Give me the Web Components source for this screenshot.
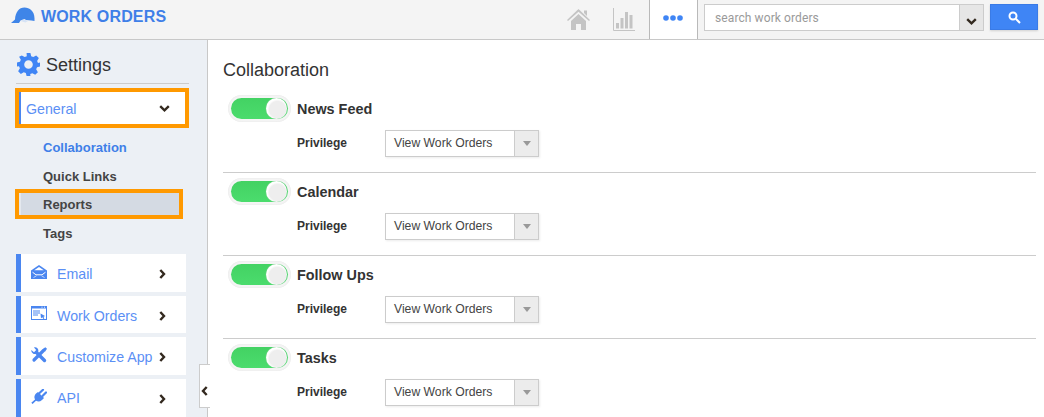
<!DOCTYPE html>
<html>
<head>
<meta charset="utf-8">
<title>Work Orders settings</title>
<style>
  html, body { margin: 0; padding: 0; height: 417px; overflow: hidden; background: #fff; font-family: "Liberation Sans", Arial, sans-serif; }
  app-shell { height: 417px; }
</style>
</head>
<body>
<app-shell>
  <top-bar slot="top"></top-bar>
  <side-bar slot="side">
    <side-sub active>Collaboration</side-sub>
    <side-sub>Quick Links</side-sub>
    <side-sub marked>Reports</side-sub>
    <side-sub>Tags</side-sub>
    <side-card icon="email" h="38" first>Email</side-card>
    <side-card icon="orders" h="37">Work Orders</side-card>
    <side-card icon="tools" h="38">Customize App</side-card>
    <side-card icon="plug" h="38">API</side-card>
  </side-bar>
  <main-pane slot="main">
    <privilege-row name="News Feed"></privilege-row>
    <privilege-row name="Calendar"></privilege-row>
    <privilege-row name="Follow Ups"></privilege-row>
    <privilege-row name="Tasks" last></privilege-row>
  </main-pane>
</app-shell>

<script>
const chevronDown = `<svg width="11" height="7" viewBox="0 0 11 7"><path d="M1.200 1.200 5.500 5.300 9.800 1.200" fill="none" stroke="#33291f" stroke-width="2.400"/></svg>`;
const chevronRight = `<svg width="7" height="10" viewBox="0 0 7 10"><path d="M1.300 1 5 5 1.300 9" fill="none" stroke="#33291f" stroke-width="2.400"/></svg>`;
const chevronLeft = `<svg width="7" height="10" viewBox="0 0 7 10"><path d="M5.700 1 2 5l3.700 4" fill="none" stroke="#33291f" stroke-width="2.400"/></svg>`;

const blue = "#4a86f0";
const icons = {
  email: `<svg width="16" height="14" viewBox="0 0 16 14"><path d="M0 5.500 8 0l8 5.500V14H0z" fill="${blue}"/><path d="M3.200 5.200 8 2l4.800 3.200z" fill="#fff"/><path d="M1.500 7.200 5 9.800h6l3.500-2.600" fill="none" stroke="#fff" stroke-width="1"/><path d="M2.500 12.500 5.500 10.800M13.500 12.500l-3-1.700" stroke="#dbe6fb" stroke-width=".8"/></svg>`,
  orders: `<svg width="16" height="14" viewBox="0 0 16 14"><rect x=".5" y=".5" width="15" height="13" fill="#fff" stroke="${blue}"/><path d="M0 0h16v2.500H0z" fill="${blue}"/><path d="M2 5h7M2 7h7M2 9h5" stroke="${blue}"/><path d="M9.500 7.500l4.500 2.500-1.500.7.800 1.800-1 .5-.9-1.800-1.400 1z" fill="${blue}"/><path d="M10.500 1.200h1M13 1.200h1" stroke="#fff" stroke-width=".9"/></svg>`,
  tools: `<svg width="16" height="16" viewBox="0 0 16 16"><path d="M5.500 5.500 13.500 13.500" stroke="${blue}" stroke-width="3.400" stroke-linecap="round"/><path d="M.3 3 3 5.200 5.200 3 3 .4C5.500-.3 7.800 1.500 7.300 4.500L5 7C2.500 7.600 0 5.500.3 3z" fill="${blue}"/><path d="M12.500 3.500 3 13" stroke="${blue}" stroke-width="3.200" stroke-linecap="round"/><path d="M11.500 2.200 14.300.2 16 1.800 14 4.800z" fill="${blue}"/></svg>`,
  plug: `<svg width="16" height="15" viewBox="0 0 16 15"><path d="M.3 13.800 4 10.500C2.800 8 3.500 6 5 4.500L7 3l6 6-2 2C9 12.800 7 13 5 11.800L1.600 15z" fill="${blue}"/><path d="M8.500 4 12 .8M11.500 7 15 3.500" stroke="${blue}" stroke-width="2.200" stroke-linecap="round"/></svg>`
};

class TopBar extends HTMLElement {
  constructor() {
    super();
    this.attachShadow({ mode: "open" });
    this.shadowRoot.innerHTML = `
      <style>
        :host { display: flex; align-items: stretch; height: 39px; background: #f4f4f4; border-bottom: 1px solid #c8c8c8; }
        .logo { display: flex; align-items: center; padding: 0 0 5px 11px; gap: 6px; color: #3f7fe8; font-weight: bold; font-size: 16px; }
        .logo svg { margin-top: -3px; }
        .logo span { letter-spacing: .15px; }
        .space { flex: 1; }
        .nav { display: flex; align-items: center; padding-bottom: 1px; }
        .home { margin-right: 23px; }
        .chart { margin-right: 14px; }
        .dots { width: 45px; background: #fff; border-left: 1px solid #b9b9b9; border-right: 1px solid #b9b9b9; display: flex; align-items: center; justify-content: center; padding: 0 2px 3px 0; }
        .search { display: flex; width: 280px; height: 27px; margin: 4px 0 0 6px; box-sizing: border-box; border: 1px solid #ccc; background: #fff; }
        .search input { flex: 1; min-width: 0; border: 0; outline: 0; padding: 1px 10px 0; font: 12px "Roboto", "Liberation Sans", sans-serif; letter-spacing: .1px; background: #fff; }
        .search input::placeholder { color: #9a9a9a; opacity: 1; }
        .drop { width: 24px; background: #e6e6e6; border-left: 1px solid #ccc; display: flex; align-items: flex-end; justify-content: center; padding-bottom: 5px; box-sizing: border-box; }
        .go { width: 48px; height: 26px; margin: 4px 6px 0 6px; background: #3f85f5; border: 1px solid #3a7be6; box-sizing: border-box; display: flex; align-items: center; justify-content: center; box-shadow: 0 1px 2px rgba(0,0,0,.15); }
      </style>
      <div class="logo">
        <svg width="24" height="17" viewBox="0 0 24 17"><path d="M0 16 4 12.500C4.500 5 8 .5 13.500.5 18.500.5 23.500 4 23.500 11.500v2.500l-3-.5L15 13l-1.500-1-4 1.500-1.500 2.500z" fill="#3f85e8"/><path d="M9.500 14c2-2 5-1.500 7.500 0l-2.500 1.500z" fill="#d6e3f5"/></svg>
        <span>WORK ORDERS</span>
      </div>
      <div class="space"></div>
      <div class="nav">
        <svg class="home" width="23" height="21" viewBox="0 0 23 21"><path d="M11.500 0 23 11l-1 1L11.500 2.800 1 12l-1-1zM4 12 11.500 5 19 12v9h-5v-6H9v6H4zM17 1.500h3v5.500l-3-3z" fill="#c4c4c4"/></svg>
        <svg class="chart" width="22" height="23" viewBox="0 0 22 23"><path d="M.5 0v22.500H22" fill="none" stroke="#c4c4c4"/><path d="M3 15h3v5.500H3zM7.500 10h3v10.500h-3zM12 4h3v16.500h-3zM16.500 7h3v13.500h-3z" fill="#c4c4c4"/></svg>
      </div>
      <div class="dots">
        <svg width="20" height="6" viewBox="0 0 20 6"><circle cx="3" cy="3" r="2.800" fill="#3f85f5"/><circle cx="10" cy="3" r="2.800" fill="#3f85f5"/><circle cx="17" cy="3" r="2.800" fill="#3f85f5"/></svg>
      </div>
      <div class="search">
        <input placeholder="search work orders">
        <div class="drop">${chevronDown}</div>
      </div>
      <div class="go">
        <svg width="13" height="13" viewBox="0 0 13 13"><circle cx="5" cy="5" r="3.500" fill="none" stroke="#fff" stroke-width="2"/><path d="M7.800 7.800 12 12" stroke="#fff" stroke-width="2"/></svg>
      </div>`;
  }
}

class SideBar extends HTMLElement {
  constructor() {
    super();
    this.attachShadow({ mode: "open" });
    this.shadowRoot.innerHTML = `
      <style>
        :host { display: block; width: 208px; height: 377px; box-sizing: border-box; background: #ecf0f5; border-right: 1px solid #c8c8c8; padding: 0 0 0 16px; flex: none; position: relative; }
        .head { display: flex; align-items: center; gap: 6px; height: 44px; padding: 8px 0 0 1px; width: 173px; border-bottom: 1px solid #ccc; color: #333; font-size: 18px; box-sizing: border-box; }
        .head svg { margin-top: -2px; }
        .general { display: flex; align-items: center; justify-content: space-between; box-sizing: border-box; width: 174px; height: 40px; margin: 4px 0 0 -1px; border: 4px solid #f90; background: #fff; color: #5b8ff5; font-size: 14.2px; padding: 1px 15px 0 7px; box-shadow: inset 2px 0 0 #4a86f0; }
        .subs { padding-top: 5px; display: flex; flex-direction: column; }
        .tab { position: absolute; left: 199px; top: 324px; width: 11px; height: 44px; box-sizing: border-box; padding: 9px 2px 0 0; background: #fff; border: 1px solid #ccc; border-right: 0; display: flex; align-items: center; justify-content: center; }
      </style>
      <div class="head">
        <svg width="23" height="23" viewBox="0 0 24 24"><path fill="#3f85f5" fill-rule="evenodd" d="M10 0h4l.8 3.400 2.200.9 3-1.800 2.800 2.800-1.800 3 .9 2.200L24 10v4l-3.100.8-.9 2.200 1.800 3-2.800 2.800-3-1.800-2.200.9L14 24h-4l-.8-3.100-2.200-.9-3 1.800-2.800-2.800 1.800-3-.9-2.200L0 14v-4l3.100-.8.9-2.200-1.800-3L5 2.500l3 1.800 2.200-.9zM12 7.500a4.500 4.500 0 1 0 0 9 4.500 4.500 0 0 0 0-9z"/></svg>
        <span>Settings</span>
      </div>
      <div class="general"><span>General</span>${chevronDown}</div>
      <div class="subs"><slot></slot></div>
      <div class="tab">${chevronLeft}</div>`;
  }
}

class SideSub extends HTMLElement {
  constructor() {
    super();
    this.attachShadow({ mode: "open" });
    this.shadowRoot.innerHTML = `
      <style>
        :host { display: flex; align-items: center; box-sizing: border-box; height: 29px; padding-left: 27px; font-size: 13px; font-weight: bold; color: #444; }
        :host([active]) { color: #3f7fe8; }
        :host([marked]) { width: 168px; height: 30px; margin: -2px 0 0 -1px; padding-left: 24px; border: 4px solid #f90; background: #d4dae3; box-shadow: inset 2px 0 0 #e4e8ee; }
      </style>
      <slot></slot>`;
  }
}

class SideCard extends HTMLElement {
  constructor() {
    super();
    this.attachShadow({ mode: "open" });
    this.shadowRoot.innerHTML = `
      <style>
        :host { display: flex; align-items: center; box-sizing: border-box; width: 170px; margin-bottom: 4px; background: #fff; border-left: 5px solid #4a86f0; color: #5b8ff5; font-size: 14.2px; padding: 2px 0 0 10px; }
        :host([first]) { margin-top: 6px; }
        :host([icon="plug"]) .txt { margin-top: -2px; }
        .ic { width: 16px; height: 16px; margin: -5px 10px 0 0; display: flex; align-items: center; }
        .txt { flex: 1; white-space: nowrap; }
        .arr { width: 7px; margin-right: 20px; display: flex; }
      </style>
      <span class="ic">${icons[this.getAttribute("icon")]}</span>
      <span class="txt"><slot></slot></span>
      <span class="arr">${chevronRight}</span>`;
    this.style.height = this.getAttribute("h") + "px";
  }
}

class MainPane extends HTMLElement {
  constructor() {
    super();
    this.attachShadow({ mode: "open" });
    this.shadowRoot.innerHTML = `
      <style>
        :host { display: block; flex: 1; padding: 20px 8px 0 15px; height: 377px; box-sizing: border-box; overflow: hidden; background: #fff; }
        h1 { margin: 0; font-size: 18px; font-weight: normal; color: #333; line-height: 21px; }
        .rows { margin-top: 9px; }
      </style>
      <h1>Collaboration</h1>
      <div class="rows"><slot></slot></div>`;
  }
}

class PrivilegeRow extends HTMLElement {
  constructor() {
    super();
    this.attachShadow({ mode: "open" });
    this.shadowRoot.innerHTML = `
      <style>
        :host { display: block; box-sizing: border-box; height: 83px; border-bottom: 1px solid #ccc; padding: 5px 0 0 5px; color: #333; }
        :host([last]) { border-bottom: 0; }
        .line { display: flex; align-items: center; height: 27px; gap: 6px; font-size: 14.4px; font-weight: bold; }
        .toggle { width: 63px; height: 27px; box-sizing: border-box; border-radius: 14px; background: #f5f5f5; padding: 3px; box-shadow: inset 0 0 2px #e2e2e2; }
        .track { display: flex; justify-content: flex-end; align-items: center; height: 21px; border-radius: 11px; background: linear-gradient(#43d263, #4bdc6d); padding-right: 1px; }
        .knob { width: 21px; height: 21px; flex: none; border-radius: 50%; background: radial-gradient(circle at 55% 55%, #eeeeee 0 50%, #fff 62%); box-shadow: 0 0 1px #ccc; }
        .priv { display: flex; align-items: center; margin: 8px 0 0 69px; font-size: 12px; font-weight: bold; }
        .priv b { width: 88px; margin-top: -1px; }
        .select { display: flex; width: 154px; height: 27px; box-sizing: border-box; border: 1px solid #ccc; font-weight: normal; background: #fff; box-shadow: 1px 1px 2px rgba(0,0,0,.08); }
        .val { flex: 1; padding-left: 8px; line-height: 25px; color: #444; font-size: 12.2px; }
        .caret { width: 23px; background: #ececec; border-left: 1px solid #ccc; display: flex; align-items: center; justify-content: center; }
        .caret i { border: 4px solid transparent; border-top: 5px solid #999; border-bottom: 0; }
      </style>
      <div class="line">
        <div class="toggle"><div class="track"><div class="knob"></div></div></div>
        <span>${this.getAttribute("name")}</span>
      </div>
      <div class="priv">
        <b>Privilege</b>
        <div class="select"><div class="val">View Work Orders</div><div class="caret"><i></i></div></div>
      </div>`;
  }
}

class AppShell extends HTMLElement {
  constructor() {
    super();
    this.attachShadow({ mode: "open" });
    this.shadowRoot.innerHTML = `
      <style>
        :host { display: block; }
        .body { display: flex; align-items: stretch; }
      </style>
      <slot name="top"></slot>
      <div class="body"><slot name="side"></slot><slot name="main"></slot></div>`;
  }
}

customElements.define("top-bar", TopBar);
customElements.define("side-bar", SideBar);
customElements.define("side-sub", SideSub);
customElements.define("side-card", SideCard);
customElements.define("main-pane", MainPane);
customElements.define("privilege-row", PrivilegeRow);
customElements.define("app-shell", AppShell);
</script>
</body>
</html>
